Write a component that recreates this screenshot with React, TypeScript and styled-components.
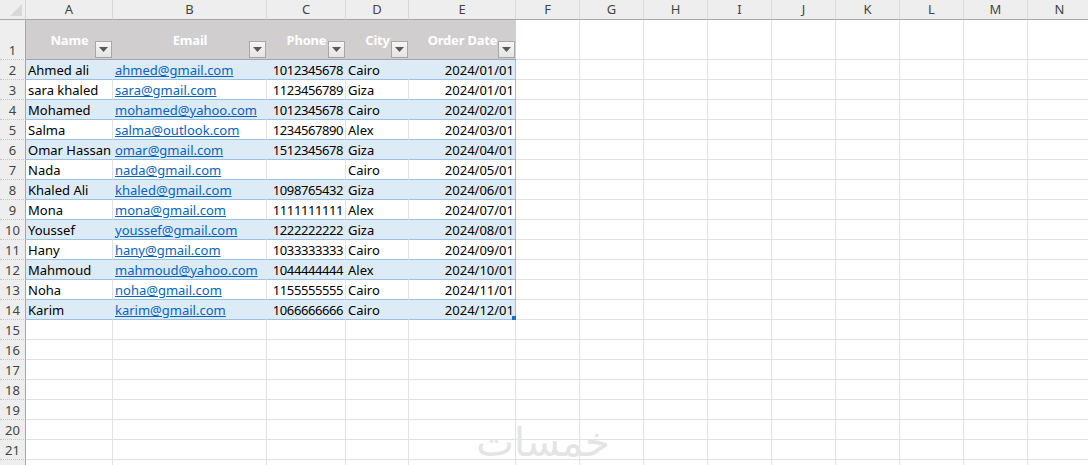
import * as React from "react"
import styled, {createGlobalStyle} from "styled-components";

const COLUMNS = [
    {label: 'A', width: 87},
    {label: 'B', width: 154},
    {label: 'C', width: 79},
    {label: 'D', width: 63},
    {label: 'E', width: 107},
    {label: 'F', width: 64},
    {label: 'G', width: 64},
    {label: 'H', width: 64},
    {label: 'I', width: 64},
    {label: 'J', width: 64},
    {label: 'K', width: 64},
    {label: 'L', width: 64},
    {label: 'M', width: 64},
    {label: 'N', width: 64},
]

const HEADERS = ['Name', 'Email', 'Phone', 'City', 'Order Date']

const ORDERS = [
    ['Ahmed ali', 'ahmed@gmail.com', '1012345678', 'Cairo', '2024/01/01'],
    ['sara khaled', 'sara@gmail.com', '1123456789', 'Giza', '2024/01/01'],
    ['Mohamed', 'mohamed@yahoo.com', '1012345678', 'Cairo', '2024/02/01'],
    ['Salma', 'salma@outlook.com', '1234567890', 'Alex', '2024/03/01'],
    ['Omar Hassan', 'omar@gmail.com', '1512345678', 'Giza', '2024/04/01'],
    ['Nada', 'nada@gmail.com', '', 'Cairo', '2024/05/01'],
    ['Khaled Ali', 'khaled@gmail.com', '1098765432', 'Giza', '2024/06/01'],
    ['Mona', 'mona@gmail.com', '1111111111', 'Alex', '2024/07/01'],
    ['Youssef', 'youssef@gmail.com', '1222222222', 'Giza', '2024/08/01'],
    ['Hany', 'hany@gmail.com', '1033333333', 'Cairo', '2024/09/01'],
    ['Mahmoud', 'mahmoud@yahoo.com', '1044444444', 'Alex', '2024/10/01'],
    ['Noha', 'noha@gmail.com', '1155555555', 'Cairo', '2024/11/01'],
    ['Karim', 'karim@gmail.com', '1066666666', 'Cairo', '2024/12/01'],
]

const EMPTY_ROWS = [15, 16, 17, 18, 19, 20, 21]
const BLANK_COLUMNS = COLUMNS.slice(5)

const App = () => {
    return (
        <>
            <GlobalStyle/>
            <Sheet>
                <Row $height={20}>
                    <Corner>
                        <svg width="12" height="12" viewBox="0 0 12 12">
                            <path d="M12 0V12H0Z" fill="#d8d8d8"/>
                        </svg>
                    </Corner>
                    {COLUMNS.map(col => (
                        <ColumnHead key={col.label} $width={col.width}>{col.label}</ColumnHead>
                    ))}
                </Row>

                <Row $height={40}>
                    <RowHead $tall>1</RowHead>
                    {HEADERS.map((title, i) => (
                        <TitleCell key={title} $width={COLUMNS[i].width}>
                            {title}
                            <FilterButton>
                                <svg width="9" height="5" viewBox="0 0 9 5">
                                    <path d="M0 0H9L4.5 5Z" fill="#595959"/>
                                </svg>
                            </FilterButton>
                        </TitleCell>
                    ))}
                    {BLANK_COLUMNS.map(col => <BlankCell key={col.label} $width={col.width}/>)}
                </Row>

                {ORDERS.map((order, rowIndex) => {
                    const banded = rowIndex % 2 === 0
                    return (
                        <Row key={order[0]} $height={20}>
                            <RowHead>{rowIndex + 2}</RowHead>
                            <DataCell $width={COLUMNS[0].width} $banded={banded}>{order[0]}</DataCell>
                            <DataCell $width={COLUMNS[1].width} $banded={banded}>
                                <MailLink href={'mailto:' + order[1]}>{order[1]}</MailLink>
                            </DataCell>
                            <PhoneCell $width={COLUMNS[2].width} $banded={banded} $right>{order[2]}</PhoneCell>
                            <DataCell $width={COLUMNS[3].width} $banded={banded}>{order[3]}</DataCell>
                            <DateCell $width={COLUMNS[4].width} $banded={banded} $right>
                                {order[4]}
                                {rowIndex === ORDERS.length - 1 && <ResizeHandle/>}
                            </DateCell>
                            {BLANK_COLUMNS.map(col => <BlankCell key={col.label} $width={col.width}/>)}
                        </Row>
                    )
                })}

                {EMPTY_ROWS.map(num => (
                    <Row key={num} $height={20}>
                        <RowHead>{num}</RowHead>
                        {COLUMNS.map(col => <BlankCell key={col.label} $width={col.width}/>)}
                    </Row>
                ))}

                <Row $height={20}>
                    <RowHead/>
                    {COLUMNS.map(col => <BlankCell key={col.label} $width={col.width}/>)}
                </Row>

                <Watermark dir="rtl">خمسات</Watermark>
            </Sheet>
        </>
    )
}

const GlobalStyle = createGlobalStyle`
  html, body {
    margin: 0;
    padding: 0;
    background: #fff;
    overflow: hidden;
  }
`

const Sheet = styled.div`
  position: relative;
  width: 1088px;
  height: 465px;
  overflow: hidden;
  font: 13px/19px "Noto Sans", sans-serif;
  color: #000;
`

const Row = styled.div<{ $height: number }>`
  display: flex;
  height: ${p => p.$height}px;
  width: max-content;
`

const Corner = styled.div`
  box-sizing: border-box;
  flex: none;
  width: 26px;
  height: 20px;
  padding: 4px 0 0 10px;
  background: #eeeeee;
  border-right: 1px solid #d4d4d4;
  border-bottom: 1px solid #a6a6a6;

  svg {
    display: block;
  }
`

const ColumnHead = styled.div<{ $width: number }>`
  box-sizing: border-box;
  flex: none;
  width: ${p => p.$width}px;
  height: 20px;
  background: #eeeeee;
  border-bottom: 1px solid #a6a6a6;
  border-right: 1px solid #d9d9d9;
  color: #444;
  text-align: center;
  line-height: 19px;
`

const RowHead = styled.div<{ $tall?: boolean }>`
  box-sizing: border-box;
  flex: none;
  width: 26px;
  height: ${p => (p.$tall ? 40 : 20)}px;
  padding-top: ${p => (p.$tall ? 21 : 1)}px;
  background: #eeeeee;
  border-right: 1px solid #a6a6a6;
  border-bottom: 1px dotted #c4c4c4;
  color: #444;
  text-align: center;
`

const BlankCell = styled.div<{ $width: number }>`
  box-sizing: border-box;
  flex: none;
  width: ${p => p.$width}px;
  border-right: 1px solid #e1e1e1;
  border-bottom: 1px solid #e1e1e1;
`

const TitleCell = styled.div<{ $width: number }>`
  position: relative;
  box-sizing: border-box;
  flex: none;
  width: ${p => p.$width}px;
  padding-top: 11px;
  background: #d0cece;
  border-bottom: 1px solid #a6a6a6;
  color: #fff;
  font-weight: 700;
  letter-spacing: -0.2px;
  text-align: center;
`

const FilterButton = styled.div`
  position: absolute;
  right: 1px;
  bottom: 1px;
  box-sizing: border-box;
  display: flex;
  align-items: center;
  justify-content: center;
  width: 17px;
  height: 17px;
  background: linear-gradient(#f6f6f6, #e4e4e4);
  border: 1px solid #a8a8a8;
`

const DataCell = styled.div<{ $width: number; $banded?: boolean; $right?: boolean }>`
  box-sizing: border-box;
  flex: none;
  width: ${p => p.$width}px;
  padding: 1px ${p => (p.$right ? 1 : 2)}px 0 2px;
  white-space: nowrap;
  overflow: hidden;
  background: ${p => (p.$banded ? '#ddebf7' : '#fff')};
  border-right: 1px solid ${p => (p.$banded ? '#ddebf7' : '#e1e1e1')};
  border-bottom: 1px solid #9bc2e6;
  text-align: ${p => (p.$right ? 'right' : 'left')};
`

const PhoneCell = styled(DataCell)`
  padding-right: 2px;
  letter-spacing: -0.42px;
`

const DateCell = styled(DataCell)`
  position: relative;
  overflow: visible;
  border-right-color: #9bc2e6;
`

const MailLink = styled.a`
  color: #0563c1;
  text-decoration: underline;
`

const ResizeHandle = styled.span`
  position: absolute;
  right: -1px;
  bottom: -1px;
  width: 4px;
  height: 4px;
  background: #1f6fc0;
`

const Watermark = styled.div`
  position: absolute;
  left: 465px;
  top: 420px;
  width: 156px;
  text-align: center;
  font: 400 40px/44px "DejaVu Sans", sans-serif;
  color: #e4e4e4;
  pointer-events: none;
`

export default App;
